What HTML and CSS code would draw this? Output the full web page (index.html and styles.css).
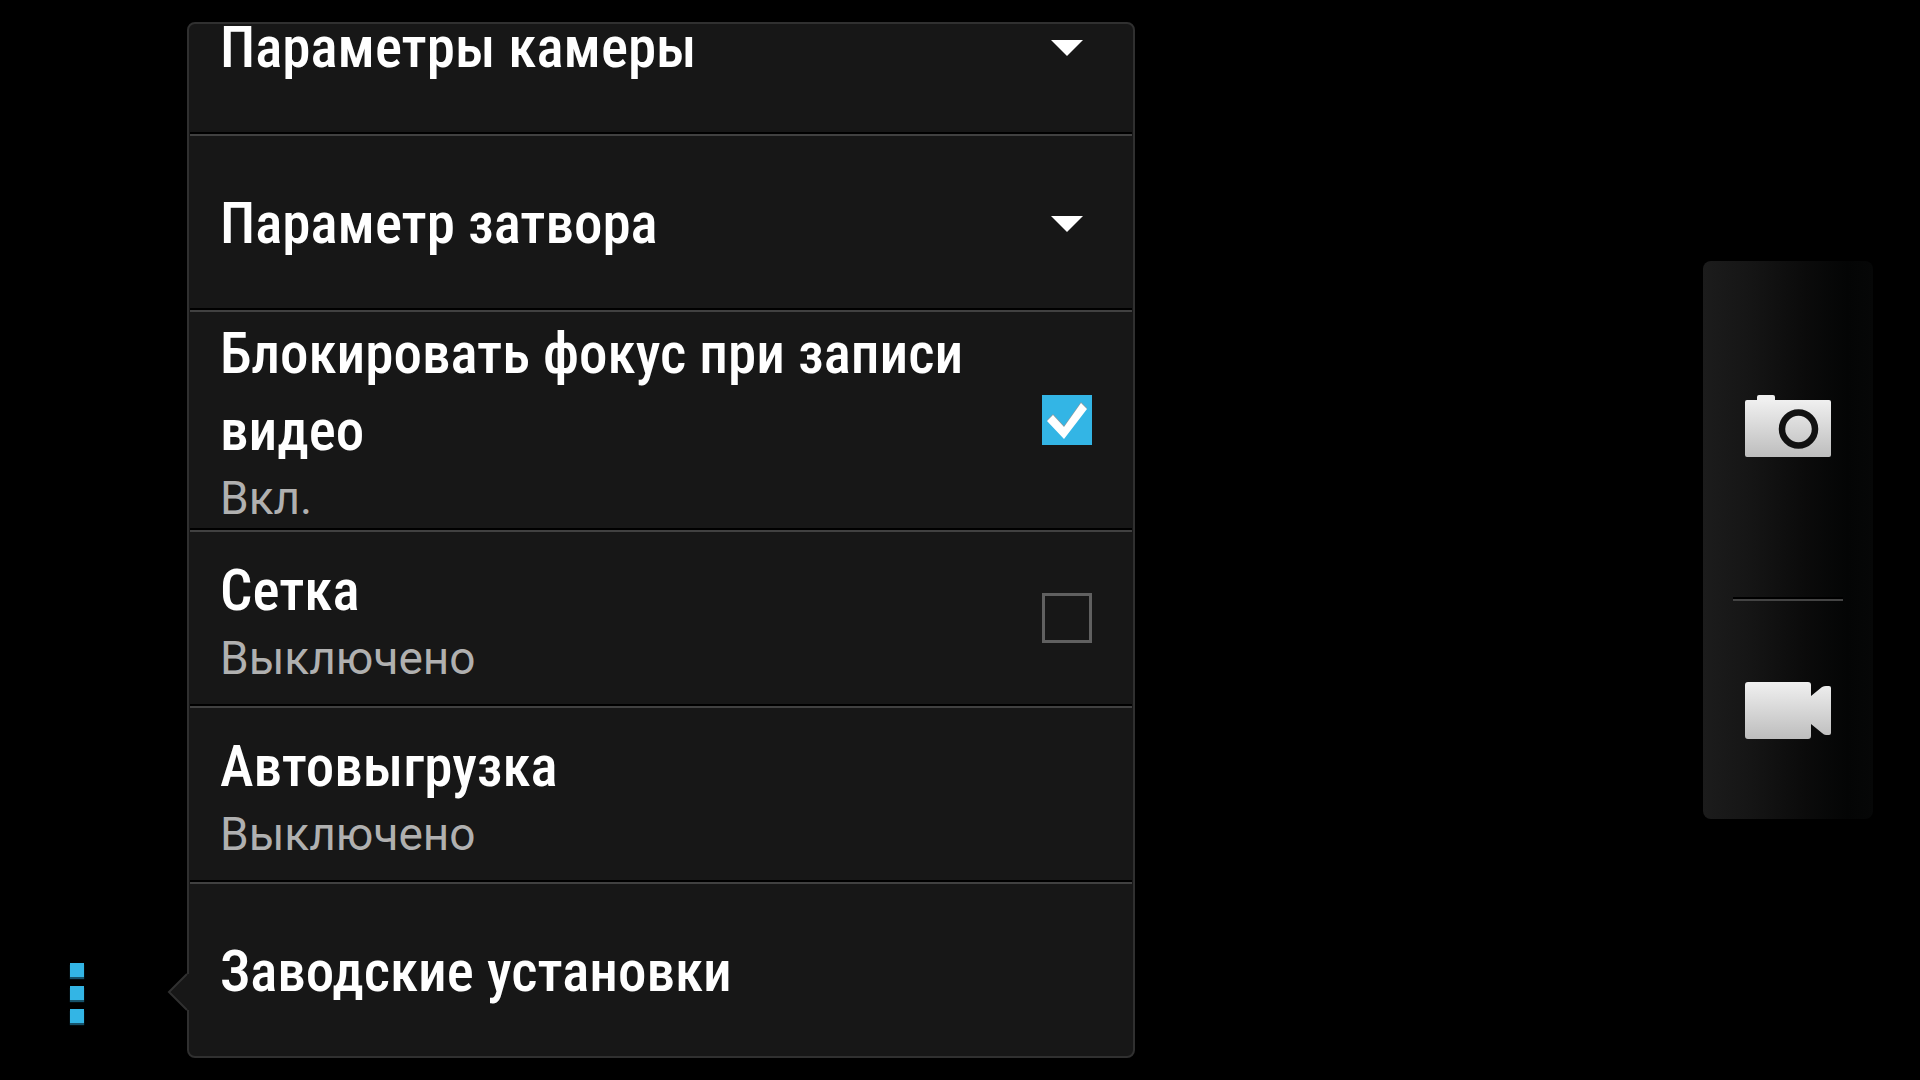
FILE: index.html
```html
<!DOCTYPE html>
<html lang="ru">
<head>
<meta charset="utf-8">
<meta name="viewport" content="width=device-width, initial-scale=1">
<title>Камера</title>
<link rel="stylesheet" href="styles.css">
</head>
<body>
<main class="viewfinder">
  <button class="menu-button" type="button" aria-label="Меню" aria-expanded="true">
    <span class="menu-dot"></span>
    <span class="menu-dot"></span>
    <span class="menu-dot"></span>
  </button>

  <section class="settings" aria-label="Настройки">
    <div class="settings-scroll">
      <button class="row" type="button" aria-expanded="false">
        <span class="row-text"><span class="row-title">Параметры камеры</span></span>
        <svg class="row-arrow" viewBox="0 0 50 50" aria-hidden="true"><path d="M9 19h32L25 35z" fill="#fff"/></svg>
      </button>
      <button class="row" type="button" aria-expanded="false">
        <span class="row-text"><span class="row-title">Параметр затвора</span></span>
        <svg class="row-arrow" viewBox="0 0 50 50" aria-hidden="true"><path d="M9 19h32L25 35z" fill="#fff"/></svg>
      </button>
      <label class="row" for="lock-focus">
        <span class="row-text">
          <span class="row-title">Блокировать фокус при записи видео</span>
          <span class="row-state">Вкл.</span>
        </span>
        <span class="check">
          <input class="check-input" type="checkbox" id="lock-focus" checked>
          <svg class="check-mark" viewBox="0 0 50 50" aria-hidden="true">
            <path d="M5 25l6-6 11 12L39 7l6 6-23 30z" fill="#8e9a9e"/>
            <path d="M5 26l6-6 11 12L39 8l6 6-23 30z" fill="#fff"/>
          </svg>
        </span>
      </label>
      <label class="row" for="grid">
        <span class="row-text">
          <span class="row-title">Сетка</span>
          <span class="row-state">Выключено</span>
        </span>
        <span class="check"><input class="check-input" type="checkbox" id="grid"></span>
      </label>
      <button class="row" type="button">
        <span class="row-text">
          <span class="row-title">Автовыгрузка</span>
          <span class="row-state">Выключено</span>
        </span>
      </button>
      <button class="row" type="button">
        <span class="row-text"><span class="row-title">Заводские установки</span></span>
      </button>
    </div>
    <svg class="settings-pointer" viewBox="0 0 22 38" aria-hidden="true">
      <path d="M22 1h-2L2 19l18 18h2z" fill="#171717"/>
      <path d="M20 1L2 19l18 18" fill="none" stroke="#303030" stroke-width="2"/>
    </svg>
  </section>

  <div class="capture">
    <button class="capture-button capture-photo" type="button" aria-label="Фото">
      <svg class="capture-icon" viewBox="0 0 86 68" aria-hidden="true">
        <defs>
          <linearGradient id="silver" gradientUnits="userSpaceOnUse" x1="0" y1="5" x2="0" y2="62">
            <stop offset="0" stop-color="#f0f0f0"/><stop offset="1" stop-color="#bdbdbd"/>
          </linearGradient>
        </defs>
        <path d="M2 5h10V2q0-2 2-2h14q2 0 2 2v3h54q2 0 2 2v53q0 2-2 2H2q-2 0-2-2V7q0-2 2-2z" fill="url(#silver)"/>
        <circle cx="53.500" cy="34" r="16.500" fill="none" stroke="#111" stroke-width="6.500"/>
      </svg>
    </button>
    <button class="capture-button capture-video" type="button" aria-label="Видео">
      <svg class="capture-icon" viewBox="0 0 86 68" aria-hidden="true">
        <path d="M3 5h60q3 0 3 3v11l11-9q2-1 4-1h3q2 0 2 2v45q0 2-2 2h-3q-2 0-4-2L66 47v12q0 3-3 3H3q-3 0-3-3V8q0-3 3-3z" fill="url(#silver)"/>
      </svg>
    </button>
  </div>
</main>
</body>
</html>
```
FILE: styles.css
```css
* {
  box-sizing: border-box;
}

body {
  margin: 0;
  background: #000;
  color: #fff;
  font-family: Roboto, "Noto Sans", sans-serif;
}

button {
  margin: 0;
  border: 0;
  padding: 0;
  background: none;
  color: inherit;
  font: inherit;
  text-align: left;
  cursor: pointer;
}

.viewfinder {
  display: flex;
  height: 100vh;
  padding: 22px 47px 22px 0;
}

/* Overflow menu */
.menu-button {
  display: flex;
  flex: none;
  flex-direction: column;
  align-items: center;
  align-self: flex-end;
  gap: 9px;
  width: 153px;
  padding: 35px 0;
}

.menu-dot {
  width: 14px;
  height: 14px;
  background: #33b5e5;
  box-shadow: 0 2px 1px #17526a;
}

/* Settings list, scrolled to its end */
.settings {
  position: relative;
  flex: 0 1 948px;
  margin-left: 34px;
}

.settings-scroll {
  display: flex;
  flex-direction: column;
  justify-content: flex-end;
  height: 100%;
  padding: 0 1px;
  overflow: hidden;
  border: 2px solid #303030;
  border-radius: 8px;
  background: #171717;
}

.settings-pointer {
  position: absolute;
  bottom: 47px;
  left: -20px;
  width: 22px;
  height: 38px;
}

.row {
  display: flex;
  flex: none;
  align-items: center;
  gap: 20px;
  min-height: 172px;
  padding: 0 40px 0 30px;
  cursor: pointer;
}

.row + .row {
  min-height: 176px;
  border-top: 2px solid #000;
  padding-top: 2px;
  background: linear-gradient(#414141, #414141) top / 100% 2px no-repeat;
}

.row-text {
  display: flex;
  flex: 1;
  flex-direction: column;
  padding-top: 3px;
}

.row-title {
  font-family: "Roboto Condensed", Roboto, sans-serif;
  font-size: 57px;
  font-weight: 500;
  line-height: 77px;
}

.row-state {
  color: #b0b0b0;
  font-size: 46px;
  line-height: 59px;
}

.row-arrow {
  flex: none;
  width: 50px;
  height: 50px;
}

.check {
  display: grid;
  flex: none;
}

.check-input,
.check-mark {
  grid-area: 1 / 1;
  width: 50px;
  height: 50px;
}

.check-input {
  margin: 0;
  appearance: none;
  border: 3px solid #606060;
}

.check-input:checked {
  border-color: #33b5e5;
  background: #33b5e5;
}

.check-mark {
  pointer-events: none;
}

.check-input:not(:checked) + .check-mark {
  visibility: hidden;
}

/* Shutter and video buttons */
.capture {
  display: flex;
  flex-direction: column;
  align-self: center;
  width: 170px;
  margin-left: auto;
  border-radius: 8px;
  background: linear-gradient(to right, #1c1c1c, #161616 25%, #0b0b0b 60%, #040505 85%, #060707);
}

.capture-button {
  display: flex;
  align-items: center;
  justify-content: center;
}

.capture-photo {
  height: 336px;
}

.capture-video {
  height: 222px;
  padding-top: 6px;
  background:
    linear-gradient(#000 50%, #444 50%) top / 110px 4px no-repeat;
}

.capture-icon {
  width: 86px;
  height: 68px;
}
```
